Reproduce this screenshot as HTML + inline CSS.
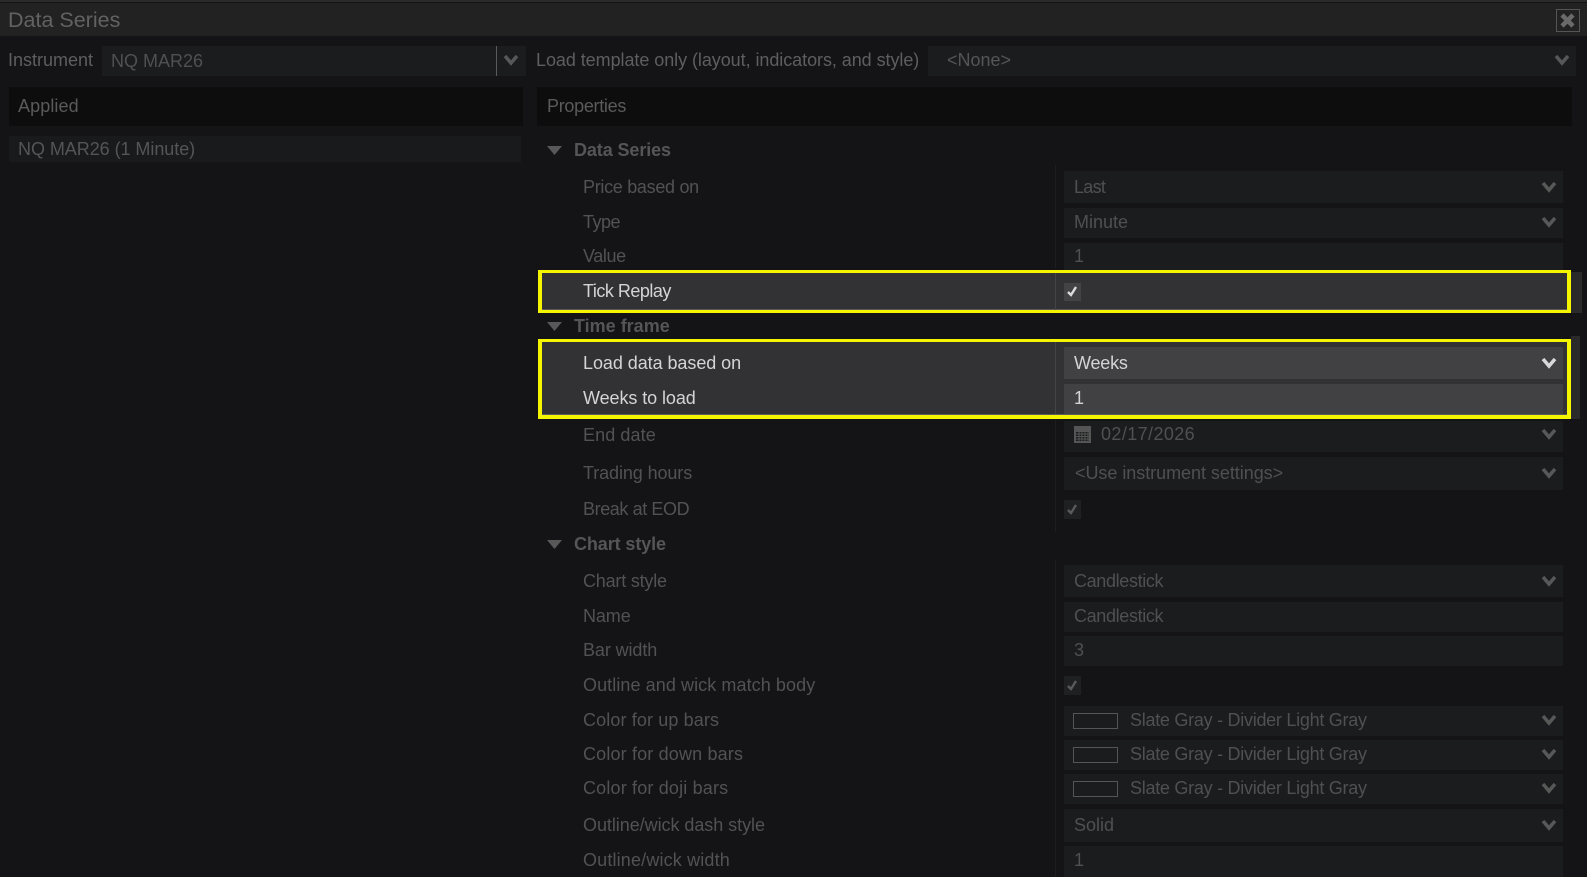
<!DOCTYPE html>
<html><head><meta charset="utf-8"><title>Data Series</title>
<style>
html,body{margin:0;padding:0;background:#141416;}
#p{position:relative;width:1587px;height:877px;overflow:hidden;background:#141416;font-family:"Liberation Sans",sans-serif;font-size:18px;color:#555;}
#p div,#p svg{position:absolute;}
.t{height:24px;line-height:24px;white-space:nowrap;}
.l{left:583px;color:#525252;}
.s{left:574px;font-weight:bold;color:#555;}
.v{left:1074px;color:#505050;}
.b{left:1064px;width:499px;background:#1b1c1d;}
.h{color:#d4d4d4;}
.c{fill:none;stroke:#585858;stroke-width:3.500;}
</style></head><body><div id="p">
<div style="left:0;top:0;width:1587px;height:2px;background:#2b2b2b"></div>
<div style="left:0;top:3px;width:1587px;height:33px;background:#222"></div>
<div class="t" style="left:8px;top:8px;font-size:21.500px;color:#626262">Data Series</div>
<div style="left:1556px;top:9px;width:22px;height:21px;border:1px solid #555"></div>
<svg style="left:1559px;top:12px" width="17" height="17"><path d="M3 3L14 14M14 3L3 14" stroke="#6a6a6a" stroke-width="4.500"/></svg>

<div class="t" style="left:8px;top:48px;color:#5e5e5e">Instrument</div>
<div style="left:102px;top:46px;width:424px;height:30px;background:#1b1c1d"></div>
<div style="left:496px;top:46px;width:1px;height:30px;background:#5a5a5a"></div>
<div class="t" style="left:111px;top:49px;color:#505050">NQ MAR26</div>
<svg style="left:503px;top:54px" width="16" height="12"><path class="c" d="M2 2L8 9L14 2"/></svg>
<div class="t" style="left:536px;top:48px;color:#5e5e5e;letter-spacing:-.06px">Load template only (layout, indicators, and style)</div>
<div style="left:928px;top:46px;width:648px;height:30px;background:#1b1c1d"></div>
<div class="t" style="left:947px;top:48px;color:#555">&lt;None&gt;</div>
<svg style="left:1554px;top:54px" width="16" height="12"><path class="c" d="M2 2L8 9L14 2"/></svg>

<div style="left:9px;top:87px;width:514px;height:39px;background:#0d0d0d"></div>
<div class="t" style="left:18px;top:94px;color:#5a5a5a;letter-spacing:.1px">Applied</div>
<div style="left:537px;top:87px;width:1035px;height:39px;background:#0d0d0d"></div>
<div class="t" style="left:547px;top:94px;color:#5a5a5a;letter-spacing:-.3px">Properties</div>
<div style="left:9px;top:136px;width:512px;height:26px;background:#191a1b"></div>
<div class="t" style="left:18px;top:137px;color:#555;letter-spacing:-.05px">NQ MAR26 (1 Minute)</div>

<div style="left:1055px;top:165px;width:1px;height:103px;background:#1d1e20"></div>
<div style="left:1055px;top:420px;width:1px;height:112px;background:#1d1e20"></div>
<div style="left:1055px;top:560px;width:1px;height:317px;background:#1d1e20"></div>

<svg style="left:547px;top:146px" width="15" height="10"><path d="M0 0H15L7.500 9Z" fill="#585858"/></svg>
<div class="t s" style="top:138px;letter-spacing:-.1px">Data Series</div>
<div class="t l" style="top:175px;letter-spacing:-.3px">Price based on</div>
<div class="t l" style="top:210px;letter-spacing:-.5px">Type</div>
<div class="t l" style="top:244px;letter-spacing:-.4px">Value</div>
<div class="b" style="top:171px;height:32px"></div>
<div class="t v" style="top:175px;letter-spacing:-.7px">Last</div>
<div class="b" style="top:208px;height:30px"></div>
<div class="t v" style="top:210px">Minute</div>
<div class="b" style="top:243px;height:27px"></div>
<div class="t v" style="top:244px">1</div>
<svg style="left:1541px;top:181px" width="16" height="12"><path class="c" d="M2 2L8 9L14 2"/></svg>
<svg style="left:1541px;top:216px" width="16" height="12"><path class="c" d="M2 2L8 9L14 2"/></svg>

<div style="left:1571px;top:272px;width:11px;height:41px;background:#2a2a2b"></div>
<div style="left:1571px;top:336px;width:9px;height:83px;background:#2a2a2b"></div>

<div style="left:538px;top:270px;width:1025px;height:37px;background:#323234;border:solid #f5f500;border-width:3px 4px 2px;border-bottom-width:3px"></div>
<div style="left:542px;top:309px;width:1025px;height:1px;background:#5a5a5a"></div>
<div style="left:1055px;top:273px;width:1px;height:37px;background:#444"></div>
<div class="t l h" style="top:279px;letter-spacing:-.5px">Tick Replay</div>
<div style="left:1064px;top:283px;width:17px;height:18px;background:#434345"></div>
<svg style="left:1066px;top:285px" width="13" height="13"><path d="M2 7L5 10L10 2" fill="none" stroke="#dcdcdc" stroke-width="2.400"/></svg>

<svg style="left:547px;top:322px" width="15" height="10"><path d="M0 0H15L7.500 9Z" fill="#585858"/></svg>
<div class="t s" style="top:314px">Time frame</div>

<div style="left:538px;top:339px;width:1025px;height:73px;background:#323234;border:solid #f5f500;border-width:3px 4px 4px"></div>
<div style="left:542px;top:414px;width:1025px;height:1px;background:#5a5a5a"></div>
<div style="left:1055px;top:342px;width:1px;height:72px;background:#444"></div>
<div class="t l h" style="top:351px;letter-spacing:-.06px">Load data based on</div>
<div class="t l h" style="top:386px;letter-spacing:-.08px">Weeks to load</div>
<div class="b" style="top:347px;height:32px;background:#414143"></div>
<div class="t v h" style="top:351px;letter-spacing:-.2px">Weeks</div>
<svg style="left:1541px;top:357px" width="16" height="12"><path d="M2 2L8 9L14 2" fill="none" stroke="#d8d8d8" stroke-width="3.500"/></svg>
<div class="b" style="top:384px;height:30px;background:#414143"></div>
<div class="t v h" style="top:386px">1</div>

<div class="t l" style="top:423px;letter-spacing:.1px">End date</div>
<div class="t l" style="top:461px;letter-spacing:-.1px">Trading hours</div>
<div class="t l" style="top:497px;letter-spacing:-.4px">Break at EOD</div>
<div class="b" style="top:421px;height:31px"></div>
<svg style="left:1074px;top:426px" width="18" height="18"><rect x="0" y="0" width="17" height="17" fill="#555"/><rect x="2" y="6" width="13" height="9" fill="#1b1c1d"/><path d="M2 8H15M2 10.500H15M2 13H15M5 6V15M8 6V15M11 6V15M14 6V15" stroke="#555" stroke-width="1"/></svg>
<div class="t v" style="left:1101px;top:422px;letter-spacing:.4px">02/17/2026</div>
<svg style="left:1541px;top:428px" width="16" height="12"><path class="c" d="M2 2L8 9L14 2"/></svg>
<div class="b" style="top:457px;height:33px"></div>
<div class="t v" style="left:1075px;top:461px;letter-spacing:-.04px">&lt;Use instrument settings&gt;</div>
<svg style="left:1541px;top:467px" width="16" height="12"><path class="c" d="M2 2L8 9L14 2"/></svg>
<div style="left:1064px;top:500px;width:17px;height:19px;background:#1f2022"></div>
<svg style="left:1066px;top:503px" width="13" height="13"><path d="M2 7L5 10L10 2" fill="none" stroke="#5a5a5a" stroke-width="2.400"/></svg>

<svg style="left:547px;top:540px" width="15" height="10"><path d="M0 0H15L7.500 9Z" fill="#585858"/></svg>
<div class="t s" style="top:532px;letter-spacing:-.1px">Chart style</div>
<div class="t l" style="top:569px;letter-spacing:-.2px">Chart style</div>
<div class="t l" style="top:604px;letter-spacing:-.1px">Name</div>
<div class="t l" style="top:638px;letter-spacing:-.1px">Bar width</div>
<div class="t l" style="top:673px;letter-spacing:.08px">Outline and wick match body</div>
<div class="t l" style="top:708px;letter-spacing:.12px">Color for up bars</div>
<div class="t l" style="top:742px;letter-spacing:.16px">Color for down bars</div>
<div class="t l" style="top:776px;letter-spacing:.17px">Color for doji bars</div>
<div class="t l" style="top:813px;letter-spacing:-.05px">Outline/wick dash style</div>
<div class="t l" style="top:848px;letter-spacing:.16px">Outline/wick width</div>

<div class="b" style="top:565px;height:32px"></div>
<div class="t v" style="top:569px;letter-spacing:-.35px">Candlestick</div>
<svg style="left:1541px;top:575px" width="16" height="12"><path class="c" d="M2 2L8 9L14 2"/></svg>
<div class="b" style="top:602px;height:30px"></div>
<div class="t v" style="top:604px;letter-spacing:-.35px">Candlestick</div>
<div class="b" style="top:636px;height:30px"></div>
<div class="t v" style="top:638px">3</div>
<div style="left:1064px;top:676px;width:17px;height:19px;background:#1f2022"></div>
<svg style="left:1066px;top:679px" width="13" height="13"><path d="M2 7L5 10L10 2" fill="none" stroke="#5a5a5a" stroke-width="2.400"/></svg>

<div class="b" style="top:706px;height:30px"></div>
<div style="left:1073px;top:713px;width:43px;height:14px;border:1px solid #555"></div>
<div class="t v" style="left:1130px;top:708px;letter-spacing:-.27px">Slate Gray - Divider Light Gray</div>
<svg style="left:1541px;top:714px" width="16" height="12"><path class="c" d="M2 2L8 9L14 2"/></svg>
<div class="b" style="top:740px;height:30px"></div>
<div style="left:1073px;top:747px;width:43px;height:14px;border:1px solid #555"></div>
<div class="t v" style="left:1130px;top:742px;letter-spacing:-.27px">Slate Gray - Divider Light Gray</div>
<svg style="left:1541px;top:748px" width="16" height="12"><path class="c" d="M2 2L8 9L14 2"/></svg>
<div class="b" style="top:774px;height:30px"></div>
<div style="left:1073px;top:781px;width:43px;height:14px;border:1px solid #555"></div>
<div class="t v" style="left:1130px;top:776px;letter-spacing:-.27px">Slate Gray - Divider Light Gray</div>
<svg style="left:1541px;top:782px" width="16" height="12"><path class="c" d="M2 2L8 9L14 2"/></svg>
<div class="b" style="top:809px;height:33px"></div>
<div class="t v" style="top:813px">Solid</div>
<svg style="left:1541px;top:819px" width="16" height="12"><path class="c" d="M2 2L8 9L14 2"/></svg>
<div class="b" style="top:846px;height:31px"></div>
<div class="t v" style="top:848px">1</div>
</div></body></html>
